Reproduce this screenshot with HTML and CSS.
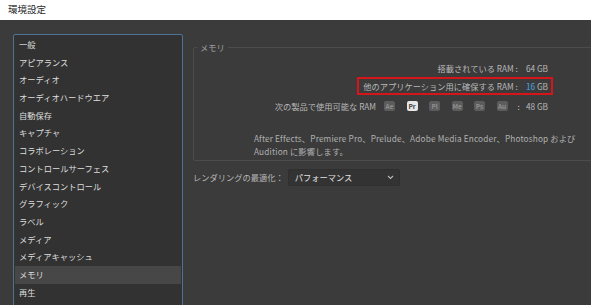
FILE: index.html
```html
<!DOCTYPE html>
<html lang="ja">
<head>
    <meta charset="UTF-8">
    <title>環境設定</title>
    <link rel="stylesheet" href="styles.css">
</head>
<body>
    <div class="titlebar">環境設定</div>
    <div class="window">
        <ul class="sidebar">
            <li>一般</li>
            <li>アピアランス</li>
            <li>オーディオ</li>
            <li>オーディオハードウエア</li>
            <li>自動保存</li>
            <li>キャプチャ</li>
            <li>コラボレーション</li>
            <li>コントロールサーフェス</li>
            <li>デバイスコントロール</li>
            <li>グラフィック</li>
            <li>ラベル</li>
            <li>メディア</li>
            <li>メディアキャッシュ</li>
            <li class="selected">メモリ</li>
            <li>再生</li>
        </ul>
        <div class="main">
            <fieldset class="group">
                <legend>メモリ</legend>
                <div class="row">
                    <span class="label">搭載されている RAM :</span>
                    <span class="value">64 GB</span>
                </div>
                <div class="row">
                    <div class="highlight">
                        <span class="label">他のアプリケーション用に確保する RAM :</span>
                        <span class="value"><span class="num">16</span> GB</span>
                    </div>
                </div>
                <div class="row row-apps">
                    <span class="label">次の製品で使用可能な RAM</span>
                    <span class="apps">
                        <span class="app">Ae</span>
                        <span class="app active">Pr</span>
                        <span class="app">Pl</span>
                        <span class="app">Me</span>
                        <span class="app">Ps</span>
                        <span class="app">Au</span>
                    </span>
                    <span class="label">:</span>
                    <span class="value">48 GB</span>
                </div>
                <p class="note">After Effects、Premiere Pro、Prelude、Adobe Media Encoder、Photoshop および<br>Audition に影響します。</p>
            </fieldset>
            <div class="render">
                <span class="label">レンダリングの最適化：</span>
                <div class="select">
                    <span>パフォーマンス</span>
                    <svg width="7" height="5" viewBox="0 0 7 5"><path d="M1 1l2.5 2.5L6 1" fill="none" stroke="#b8b8b8" stroke-width="1.1"/></svg>
                </div>
            </div>
        </div>
    </div>
</body>
</html>
```

FILE: styles.css
```css
body {
    margin: 0;
    width: 591px;
    height: 305px;
    overflow: hidden;
    background-color: #3b3b3b;
    font-family: "Noto Sans CJK JP", "Noto Sans", sans-serif;
    font-size: 8.25px;
    color: #c0c0c0;
}

.titlebar {
    height: 20px;
    line-height: 18px;
    padding-left: 8px;
    background-color: #ffffff;
    color: #2a2a2a;
    font-size: 9.5px;
}

.window {
    display: flex;
    align-items: flex-start;
    padding: 14px 0 0 13px;
}

.sidebar {
    list-style: none;
    margin: 0;
    padding: 1px;
    width: 166px;
    height: 300px;
    border: 1px solid #4f7396;
    border-radius: 2px;
    background-color: #323232;
    flex-shrink: 0;
}

.sidebar li {
    height: 17.7px;
    line-height: 17.7px;
    padding-left: 4px;
    color: #dedede;
}

.sidebar li.selected {
    background-color: #474747;
}

.main {
    margin: 7px 0 0 10px;
    width: 420px;
    flex-shrink: 0;
}

.group {
    min-width: 0;
    margin: 0;
    padding: 6px 64px 2px 60px;
    border: 1px solid #4c4c4c;
    border-radius: 2px;
}

.group legend {
    padding: 0 3px;
    margin-left: -57px;
    line-height: 12px;
    color: #a0a0a0;
}

.row {
    display: flex;
    justify-content: flex-end;
    align-items: center;
    gap: 8px;
    height: 18px;
    color: #b8b8b8;
}

.row-apps {
    gap: 6px;
    margin-top: 2px;
}

.highlight {
    display: flex;
    align-items: center;
    gap: 8px;
    height: 14px;
    margin-right: -5px;
    padding: 0 3px 0 4px;
    border: 2px solid #d4161a;
}

.num {
    color: #4fa3e3;
}

.apps {
    display: flex;
    gap: 11.5px;
    margin: 0 4px 0 2px;
}

.app {
    width: 11px;
    height: 10px;
    line-height: 10px;
    border-radius: 2px;
    background-color: #5c5c5c;
    color: #909090;
    font-size: 6.5px;
    font-weight: bold;
    text-align: center;
}

.app.active {
    background-color: #e6e6e6;
    color: #404040;
}

.note {
    margin: 16.5px 0 0;
    line-height: 13px;
    letter-spacing: 0.15px;
    color: #b0b0b0;
    white-space: nowrap;
}

.render {
    display: flex;
    align-items: center;
    gap: 4px;
    margin-top: 8px;
    color: #b8b8b8;
}

.select {
    display: flex;
    justify-content: space-between;
    align-items: center;
    width: 99px;
    height: 15px;
    padding: 0 5px 0 6px;
    border: 1px solid #2f2f2f;
    border-radius: 2px;
    background-color: #333333;
    color: #e2e2e2;
}
```
